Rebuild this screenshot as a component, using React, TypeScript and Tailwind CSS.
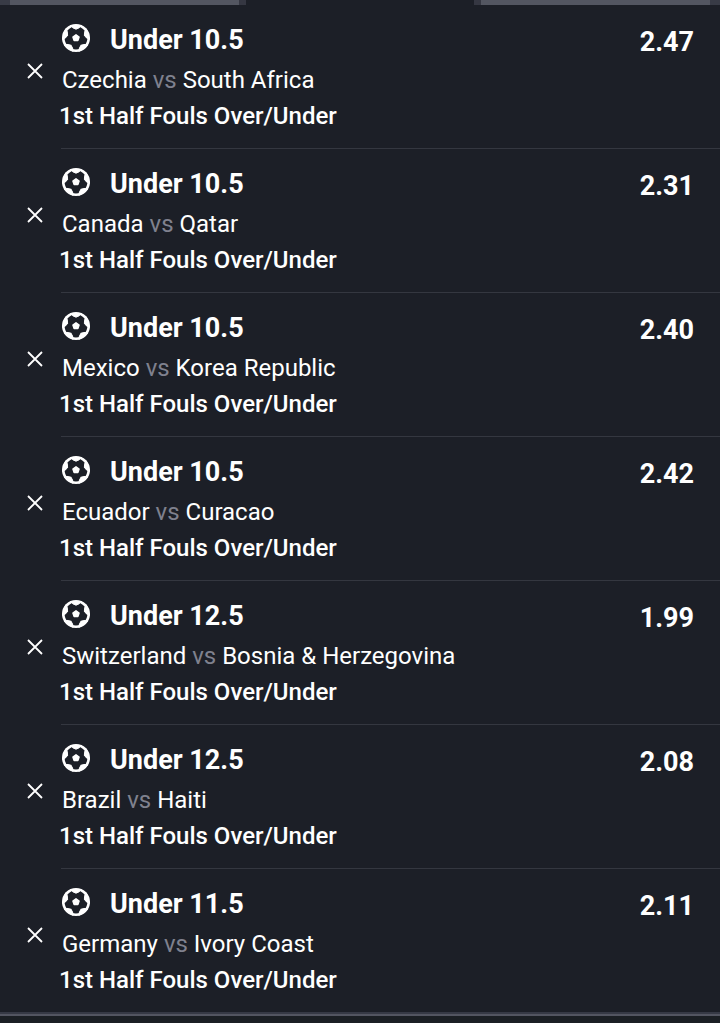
import React from 'react';

interface Selection {
  id: number;
  pick: string;
  home: string;
  away: string;
  market: string;
  odds: string;
}

const MARKET = '1st Half Fouls Over/Under';

const selections: Selection[] = [
  { id: 1, pick: 'Under 10.5', home: 'Czechia', away: 'South Africa', market: MARKET, odds: '2.47' },
  { id: 2, pick: 'Under 10.5', home: 'Canada', away: 'Qatar', market: MARKET, odds: '2.31' },
  { id: 3, pick: 'Under 10.5', home: 'Mexico', away: 'Korea Republic', market: MARKET, odds: '2.40' },
  { id: 4, pick: 'Under 10.5', home: 'Ecuador', away: 'Curacao', market: MARKET, odds: '2.42' },
  { id: 5, pick: 'Under 12.5', home: 'Switzerland', away: 'Bosnia & Herzegovina', market: MARKET, odds: '1.99' },
  { id: 6, pick: 'Under 12.5', home: 'Brazil', away: 'Haiti', market: MARKET, odds: '2.08' },
  { id: 7, pick: 'Under 11.5', home: 'Germany', away: 'Ivory Coast', market: MARKET, odds: '2.11' },
];

const PATCH_ANGLES = [0, 72, 144, 216, 288];

const FootballIcon = () => (
  <svg viewBox="0 0 28 28" className="size-7 shrink-0" aria-hidden="true">
    <circle cx="14" cy="14" r="12.7" fill="#1c1f27" stroke="#fff" strokeWidth="2.6" />
    {/* outer patches, one per pentagon corner */}
    {PATCH_ANGLES.map((angle) => (
      <path
        key={angle}
        d="M8.6 1.5 L10.8 3.8 L14 5.2 L17.2 3.8 L19.4 1.5 Z"
        fill="#fff"
        stroke="#fff"
        strokeWidth="1"
        strokeLinejoin="round"
        transform={`rotate(${angle} 14 14)`}
      />
    ))}
    <path
      d="M14 10.7 L17.1 13 L15.9 16.6 L12.1 16.6 L10.9 13 Z"
      fill="#fff"
      stroke="#fff"
      strokeWidth="1.4"
      strokeLinejoin="round"
    />
  </svg>
);

const CloseIcon = () => (
  <svg viewBox="0 0 16 16" className="size-4" aria-hidden="true">
    <path d="M1 1 L15 15 M15 1 L1 15" stroke="#fff" strokeWidth="1.8" fill="none" />
  </svg>
);

/** Bottom edge of the tabs above the slip, the middle one is open */
const TabEdge = () => (
  <div className="flex h-[5px]">
    <div className="w-2.5 bg-[#383b46]" />
    <div className="flex-1 bg-[#535661]" />
    <div className="w-[7px] bg-[#353742]" />
    <div className="flex-1" />
    <div className="w-[7px] bg-[#353742]" />
    <div className="flex-1 bg-[#535661]" />
    <div className="w-2.5 bg-[#383b46]" />
  </div>
);

const SelectionRow: React.FC<{ selection: Selection }> = ({ selection }) => (
  <li className="group flex">
    <div className="flex w-[61px] shrink-0 items-center justify-end pr-[18px] pb-3">
      <button type="button" className="flex" aria-label={`Remove ${selection.home} vs ${selection.away}`}>
        <CloseIcon />
      </button>
    </div>
    <div className="flex flex-1 items-start justify-between border-b border-[#343740] pt-[19px] pr-[26px] pb-3.5 group-last:border-b-0">
      <div>
        <div className="mb-1.5 flex items-start gap-5 pl-px">
          <FootballIcon />
          <h2 className="text-[27px] leading-8 font-bold">{selection.pick}</h2>
        </div>
        <p className="pl-px text-2xl leading-9">
          {selection.home} <span className="text-[#7f818e]">vs</span> {selection.away}
        </p>
        <p className="-ml-0.5 text-2xl leading-9 font-medium">{selection.market}</p>
      </div>
      <span className="text-[27px] leading-9 font-bold">{selection.odds}</span>
    </div>
  </li>
);

export default function App() {
  return (
    <main className="min-h-screen bg-[#1c1f27] font-[Roboto,sans-serif] text-white">
      <TabEdge />
      <ul>
        {selections.map((selection) => (
          <SelectionRow key={selection.id} selection={selection} />
        ))}
      </ul>
      <div className="h-1 border-t-2 border-[#363945] bg-[#535561]" />
      <div className="h-[7px] bg-[#1b1f24]" />
    </main>
  );
}
